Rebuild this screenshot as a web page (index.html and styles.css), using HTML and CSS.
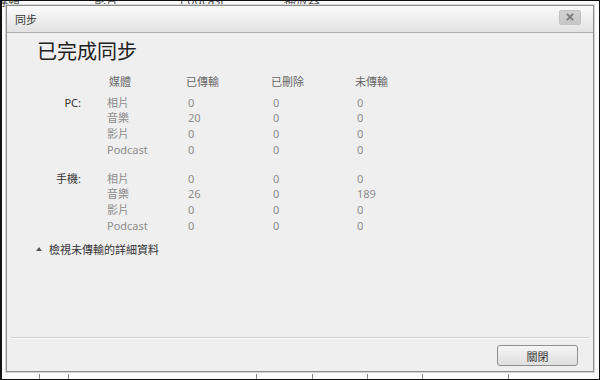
FILE: index.html
```html
<!DOCTYPE html>
<html lang="zh-Hant">
<head>
<meta charset="utf-8">
<title>同步</title>
<link rel="stylesheet" href="styles.css">
</head>
<body>
<div class="screen">
  <div class="backdrop" aria-hidden="true">
    <div class="bg-tabs">
      <span class="bg-tab t1">專輯</span>
      <span class="bg-tab t2">影片</span>
      <span class="bg-tab t3">Podcast</span>
      <span class="bg-tab t4">播放器</span>
    </div>
    <div class="bg-ticks">
      <span class="tick k1"></span><span class="tick k2"></span><span class="tick k3"></span><span class="tick k4"></span><span class="tick k5"></span><span class="tick k6"></span><span class="tick k7"></span>
    </div>
  </div>

  <div class="dialog">
    <div class="titlebar">
      <span class="title">同步</span>
      <button class="close" type="button" aria-label="關閉">
        <svg width="8" height="8" viewBox="0 0 8 8"><path d="M1.5 1.5 L6.5 6.5 M6.5 1.5 L1.5 6.5" stroke="#7a7a7a" stroke-width="1.8" stroke-linecap="square"/></svg>
      </button>
    </div>

    <div class="content">
      <h1 class="heading">已完成同步</h1>

      <div class="grid head-row">
        <span class="group"></span>
        <span class="hcell hmedia">媒體</span>
        <span class="hcell">已傳輸</span>
        <span class="hcell">已刪除</span>
        <span class="hcell">未傳輸</span>
      </div>

      <div class="grid section">
        <span class="group">PC:</span>
        <span class="media">相片</span><span class="val">0</span><span class="val">0</span><span class="val">0</span>
        <span class="group"></span>
        <span class="media">音樂</span><span class="val">20</span><span class="val">0</span><span class="val">0</span>
        <span class="group"></span>
        <span class="media">影片</span><span class="val">0</span><span class="val">0</span><span class="val">0</span>
        <span class="group"></span>
        <span class="media lat">Podcast</span><span class="val">0</span><span class="val">0</span><span class="val">0</span>
      </div>

      <div class="grid section second">
        <span class="group">手機:</span>
        <span class="media">相片</span><span class="val">0</span><span class="val">0</span><span class="val">0</span>
        <span class="group"></span>
        <span class="media">音樂</span><span class="val">26</span><span class="val">0</span><span class="val">189</span>
        <span class="group"></span>
        <span class="media">影片</span><span class="val">0</span><span class="val">0</span><span class="val">0</span>
        <span class="group"></span>
        <span class="media lat">Podcast</span><span class="val">0</span><span class="val">0</span><span class="val">0</span>
      </div>

      <div class="details">
        <span class="tri"></span>
        <span class="details-text">檢視未傳輸的詳細資料</span>
      </div>
    </div>

    <div class="footer">
      <button class="btn" type="button">關閉</button>
    </div>
  </div>
</div>
</body>
</html>
```

FILE: styles.css
```css
* { box-sizing: border-box; }

html, body {
  margin: 0;
  padding: 0;
  background: #ffffff;
}

body {
  font-family: "Noto Sans", "Noto Sans CJK TC", sans-serif;
}

.screen {
  position: relative;
  width: 600px;
  height: 380px;
  border: 1px solid #111;
  border-left-width: 2px;
  background: #fbfbfb;
  overflow: hidden;
  padding: 4px 5px 7px 4px;
  display: flex;
}

/* background application peeking out behind the dialog */
.backdrop {
  position: absolute;
  inset: 0;
  z-index: 0;
}

.bg-tabs {
  position: absolute;
  top: -9px;
  left: 0;
  right: 0;
  height: 14px;
  font-size: 12px;
  color: #555;
  white-space: nowrap;
}

.bg-tab { position: absolute; top: 0; }
.bg-tab.t1 { left: -6px; }
.bg-tab.t2 { left: 92px; }
.bg-tab.t3 { left: 178px; }
.bg-tab.t4 { left: 282px; }

.bg-ticks {
  position: absolute;
  bottom: 0;
  left: 0;
  right: 0;
  height: 6px;
}

.tick {
  position: absolute;
  bottom: 0;
  width: 1px;
  height: 5px;
  background: #888;
}
.tick.k1 { left: 37px; }
.tick.k2 { left: 66px; }
.tick.k3 { left: 254px; }
.tick.k4 { left: 310px; }
.tick.k5 { left: 365px; }
.tick.k6 { left: 420px; }
.tick.k7 { left: 506px; }

/* dialog */
.dialog {
  position: relative;
  z-index: 1;
  flex: 1;
  display: flex;
  flex-direction: column;
  background: #efefef;
  border: 1px solid #8c8c8c;
  box-shadow: 0 0 0 1px #d6d6d6;
}

.titlebar {
  height: 27px;
  display: flex;
  align-items: center;
  justify-content: space-between;
  padding: 0 12px 0 8px;
  background: linear-gradient(#fbfbfb, #e2e2e2);
  border-bottom: 1px solid #aeaeae;
}

.title {
  font-size: 11px;
  color: #333;
  font-family: "Noto Sans CJK TC", sans-serif;
}

.close {
  width: 22px;
  height: 15px;
  margin-top: -4px;
  padding: 0;
  border: 1px solid #c2c2c2;
  border-radius: 2px;
  background: linear-gradient(#d2d2d2, #c6c6c6);
  display: flex;
  align-items: center;
  justify-content: center;
}

.content {
  flex: 1;
  padding: 5px 0 0 30px;
}

.heading {
  margin: 0;
  font-family: "Noto Sans CJK TC", sans-serif;
  font-weight: normal;
  font-size: 20px;
  line-height: 26px;
  color: #222;
}

.grid {
  display: grid;
  grid-template-columns: 44px 107px 85px 84px 1fr;
  font-size: 11px;
  line-height: 15.7px;
}

.head-row {
  margin-top: 10px;
  margin-bottom: 5px;
}

.hcell {
  color: #666;
  font-family: "Noto Sans CJK TC", sans-serif;
  font-size: 11px;
  margin-left: -2px;
}

.head-row .hmedia { grid-column: 2; padding-left: 30px; }

.group {
  grid-column: 1;
  color: #333;
  text-align: right;
  font-family: "Noto Sans", "Noto Sans CJK TC", sans-serif;
}

.media {
  grid-column: 2;
  padding-left: 26px;
  color: #8c8c8c;
  font-family: "Noto Sans CJK TC", sans-serif;
}

.media.lat { font-family: "Noto Sans", sans-serif; }

.val {
  color: #8c8c8c;
}

.section.second {
  margin-top: 13px;
}

.details {
  display: flex;
  align-items: center;
  gap: 7px;
  margin-top: 8px;
  margin-left: -1px;
}

.tri {
  width: 0;
  height: 0;
  border-left: 3px solid transparent;
  border-right: 3px solid transparent;
  border-bottom: 4px solid #555;
}

.details-text {
  font-family: "Noto Sans CJK TC", sans-serif;
  font-size: 11px;
  color: #333;
}

.footer {
  margin: 0 4px;
  border-top: 1px solid #cfcfcf;
  box-shadow: inset 0 1px 0 #fafafa;
  padding: 7px 11px 5px 0;
  display: flex;
  justify-content: flex-end;
}

.btn {
  width: 81px;
  height: 21px;
  border: 1px solid #8f8f8f;
  border-radius: 3px;
  background: linear-gradient(#f6f6f6, #dedede);
  font-family: "Noto Sans CJK TC", sans-serif;
  font-size: 11px;
  color: #333;
  padding: 0;
}
```
